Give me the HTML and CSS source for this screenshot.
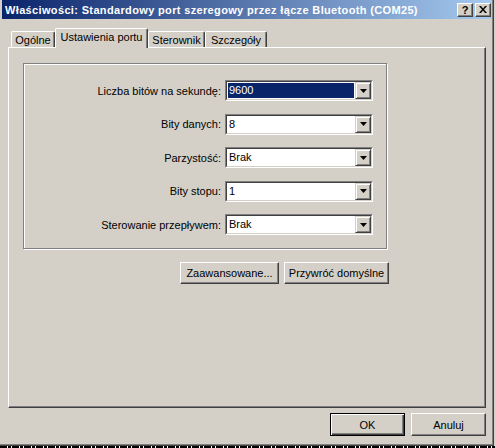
FILE: index.html
```html
<!DOCTYPE html>
<html lang="pl">
<head>
<meta charset="utf-8">
<title>Właściwości</title>
<link rel="stylesheet" href="styles.css">
</head>
<body>
<div class="window">
  <div class="titlebar">
    <span class="title">Właściwości: Standardowy port szeregowy przez łącze Bluetooth (COM25)</span>
    <div class="tb-buttons">
      <span class="tb-btn help">?</span>
      <span class="tb-btn close"><svg width="8" height="7" viewBox="0 0 8 7"><path d="M0 0h2l2 2.5L6 0h2L5 3.5 8 7H6L4 4.5 2 7H0l3-3.5z" fill="#000"/></svg></span>
    </div>
  </div>
  <div class="tabs">
    <span class="tab t1">Ogólne</span>
    <span class="tab active t2">Ustawienia portu</span>
    <span class="tab t3">Sterownik</span>
    <span class="tab t4">Szczegóły</span>
  </div>
  <div class="panel">
    <div class="group">
      <div class="row">
        <span class="label">Liczba bitów na sekundę:</span>
        <div class="combo"><div class="combo-in"><span class="combo-text sel">9600</span><span class="drop"><svg width="7" height="4" viewBox="0 0 7 4"><path d="M0 0h7L3.5 4z" fill="#000"/></svg></span></div></div>
      </div>
      <div class="row">
        <span class="label">Bity danych:</span>
        <div class="combo"><div class="combo-in"><span class="combo-text">8</span><span class="drop"><svg width="7" height="4" viewBox="0 0 7 4"><path d="M0 0h7L3.5 4z" fill="#000"/></svg></span></div></div>
      </div>
      <div class="row">
        <span class="label">Parzystość:</span>
        <div class="combo"><div class="combo-in"><span class="combo-text">Brak</span><span class="drop"><svg width="7" height="4" viewBox="0 0 7 4"><path d="M0 0h7L3.5 4z" fill="#000"/></svg></span></div></div>
      </div>
      <div class="row">
        <span class="label">Bity stopu:</span>
        <div class="combo"><div class="combo-in"><span class="combo-text">1</span><span class="drop"><svg width="7" height="4" viewBox="0 0 7 4"><path d="M0 0h7L3.5 4z" fill="#000"/></svg></span></div></div>
      </div>
      <div class="row">
        <span class="label">Sterowanie przepływem:</span>
        <div class="combo"><div class="combo-in"><span class="combo-text">Brak</span><span class="drop"><svg width="7" height="4" viewBox="0 0 7 4"><path d="M0 0h7L3.5 4z" fill="#000"/></svg></span></div></div>
      </div>
    </div>
    <div class="panel-buttons">
      <span class="btn w99">Zaawansowane...</span>
      <span class="btn w105">Przywróć domyślne</span>
    </div>
  </div>
  <div class="dlg-buttons">
    <span class="btn default w75">OK</span>
    <span class="btn w75">Anuluj</span>
  </div>
</div>
<div class="under"></div>
</body>
</html>
```
FILE: styles.css
```css
html, body {
  margin: 0;
  padding: 0;
}
body {
  width: 495px;
  height: 448px;
  overflow: hidden;
  background: #d4d0c8;
  font-family: "Liberation Sans", Arial, sans-serif;
  font-size: 11px;
  color: #000;
}
.window {
  width: 494px;
  height: 446px;
  box-sizing: border-box;
  padding-left: 2px;
  background: #d4d0c8;
  border-right: 1px solid #404040;
  border-bottom: 1px solid #404040;
  box-shadow: inset -1px -1px 0 #808080;
  display: flex;
  flex-direction: column;
}
.titlebar {
  height: 19px;
  width: 490px;
  background: linear-gradient(90deg, #0a246a 0%, #a6caf0 100%);
  display: flex;
  align-items: center;
  justify-content: space-between;
}
.title {
  color: #fff;
  font-weight: bold;
  font-size: 11px;
  letter-spacing: 0.35px;
  padding-left: 3px;
  white-space: nowrap;
}
.tb-buttons {
  display: flex;
  gap: 2px;
  padding-right: 1px;
}
.tb-btn {
  width: 16px;
  height: 14px;
  box-sizing: border-box;
  background: #d4d0c8;
  border: 1px solid;
  border-color: #fff #404040 #404040 #fff;
  box-shadow: inset -1px -1px 0 #808080;
  display: flex;
  align-items: center;
  justify-content: center;
}
.help {
  font-weight: bold;
  font-size: 11px;
  line-height: 12px;
}
.close svg {
  display: block;
}
.tabs {
  margin-top: 9px;
  margin-left: 9px;
  height: 19px;
  display: flex;
  align-items: flex-end;
  position: relative;
  z-index: 1;
}
.tab {
  height: 16px;
  box-sizing: border-box;
  border-top: 1px solid #fff;
  border-left: 1px solid #fff;
  border-right: 1px solid #404040;
  box-shadow: inset -1px 0 0 #808080;
  border-radius: 2px 2px 0 0;
  background: #d4d0c8;
  text-align: center;
  line-height: 15px;
  padding-top: 1px;
}
.t1 { width: 44px; }
.t2 { width: 93px; }
.t3 { width: 57px; }
.t4 { width: 62px; }
.tab.active {
  height: 20px;
  margin-bottom: -1px;
  line-height: 16px;
  padding-top: 0;
}
.panel {
  margin-left: 6px;
  width: 478px;
  height: 361px;
  box-sizing: border-box;
  border: 1px solid;
  border-color: #fff #404040 #404040 #fff;
  box-shadow: inset -1px -1px 0 #808080;
  padding: 15px 0 0 14px;
}
.group {
  width: 364px;
  height: 186px;
  box-sizing: border-box;
  border: 1px solid #808080;
  box-shadow: inset 1px 1px 0 #fff, 1px 1px 0 #fff;
  padding: 16px 13px 0 0;
  display: flex;
  flex-direction: column;
  gap: 12.5px;
}
.row {
  display: flex;
  justify-content: flex-end;
  align-items: center;
  height: 21px;
}
.label {
  margin-right: 4px;
  white-space: nowrap;
}
.combo {
  width: 148px;
  height: 21px;
  box-sizing: border-box;
  border: 1px solid;
  border-color: #808080 #fff #fff #808080;
}
.combo-in {
  height: 100%;
  box-sizing: border-box;
  border: 1px solid;
  border-color: #404040 #d4d0c8 #d4d0c8 #404040;
  background: #fff;
  display: flex;
}
.combo-text {
  flex: 1;
  padding-left: 2px;
  line-height: 17px;
}
.combo-text.sel {
  background: #0a246a;
  color: #fff;
  margin: 1px 1px 1px 1px;
  line-height: 15px;
  padding-left: 1px;
}
.drop {
  width: 16px;
  height: 17px;
  box-sizing: border-box;
  background: #d4d0c8;
  border: 1px solid;
  border-color: #d4d0c8 #404040 #404040 #d4d0c8;
  box-shadow: inset 1px 1px 0 #fff, inset -1px -1px 0 #808080;
  display: flex;
  align-items: center;
  justify-content: center;
}
.drop svg {
  display: block;
}
.panel-buttons {
  display: flex;
  gap: 5px;
  margin-top: 13px;
  margin-left: 157px;
}
.btn {
  height: 22px;
  box-sizing: border-box;
  background: #d4d0c8;
  border: 1px solid;
  border-color: #fff #404040 #404040 #fff;
  box-shadow: inset -1px -1px 0 #808080;
  display: flex;
  align-items: center;
  justify-content: center;
  white-space: nowrap;
}
.w99 { width: 99px; }
.w105 { width: 105px; }
.w75 { width: 75px; height: 23px; }
.btn.default {
  border: 1px solid #000;
  box-shadow: inset 1px 1px 0 #fff, inset -1px -1px 0 #404040, inset -2px -2px 0 #808080;
}
.dlg-buttons {
  display: flex;
  gap: 6px;
  margin-top: 5px;
  margin-left: 328px;
}
.under {
  height: 2px;
  background: repeating-linear-gradient(90deg, #000 0 7px, #fff 7px 8px, #000 8px 11px, #fff 11px 12px);
}
```
